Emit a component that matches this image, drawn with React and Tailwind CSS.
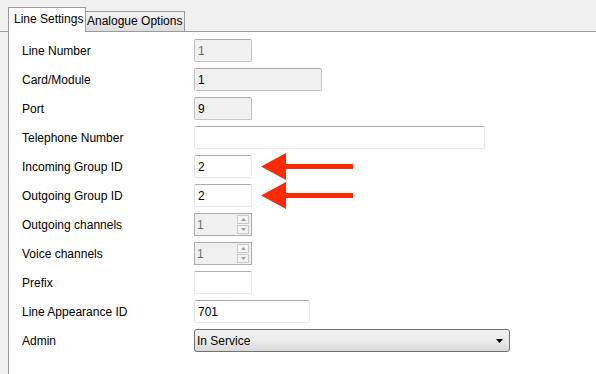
import React from 'react';

const font = { fontFamily: '"Segoe UI", "Liberation Sans", Arial, sans-serif' };

function TextBox({ value = '', width = 'w-[58px]', disabled = false, dim = false }) {
  return (
    <div
      className={`${width} h-[23px] flex items-center px-[3px] text-[12px] border ${
        disabled
          ? 'bg-[#f0f0f0] border-[#c4c4c4] border-t-[#adadad]'
          : 'bg-white border-[#e3e9ef] border-t-[#abadb3] border-l-[#e2e3ea]'
      } ${dim ? 'text-[#6d6d6d] border-[#adadad]' : 'text-black'} rounded-[2px]`}
    >
      {value}
    </div>
  );
}

function Spinner({ value }) {
  return (
    <div className="w-[58px] h-[23px] flex items-stretch border border-[#adadad] bg-[#f0f0f0] text-[12px] text-[#6d6d6d]">
      <div className="flex-1 flex items-center px-[2px]">{value}</div>
      <div className="w-[15px] flex flex-col gap-px p-px pr-[2px]">
        <div className="flex-1 border border-[#c8c8c8] bg-[#f4f4f4] flex items-center justify-center">
          <svg width="5" height="3" viewBox="0 0 5 3"><path d="M2.5 0L5 3H0z" fill="#a0a0a0" /></svg>
        </div>
        <div className="flex-1 border border-[#c8c8c8] bg-[#f4f4f4] flex items-center justify-center">
          <svg width="5" height="3" viewBox="0 0 5 3"><path d="M0 0h5L2.5 3z" fill="#a0a0a0" /></svg>
        </div>
      </div>
    </div>
  );
}

function Select({ value }) {
  return (
    <div className="w-[316px] h-[23px] flex items-center justify-between pl-[2px] pr-[6px] text-[12px] text-black border border-[#707070] rounded-[3px] bg-gradient-to-b from-[#f2f2f2] via-[#ebebeb] to-[#d9d9d9]">
      <span>{value}</span>
      <svg width="7" height="4" viewBox="0 0 7 4"><path d="M0 0h7L3.5 4z" fill="#000" /></svg>
    </div>
  );
}

function Arrow() {
  return (
    <svg width="92" height="28" viewBox="0 0 92 28" className="ml-[9px]">
      <path d="M0 13.5L25 0V11H92V16H25V27z" fill="#ff2a00" />
    </svg>
  );
}

const rows = [
  { label: 'Line Number', field: <TextBox value="1" disabled dim /> },
  { label: 'Card/Module', field: <TextBox value="1" width="w-[128px]" disabled /> },
  { label: 'Port', field: <TextBox value="9" disabled /> },
  { label: 'Telephone Number', field: <TextBox width="w-[291px]" /> },
  { label: 'Incoming Group ID', field: <TextBox value="2" />, arrow: true },
  { label: 'Outgoing Group ID', field: <TextBox value="2" />, arrow: true },
  { label: 'Outgoing channels', field: <Spinner value="1" /> },
  { label: 'Voice channels', field: <Spinner value="1" /> },
  { label: 'Prefix', field: <TextBox /> },
  { label: 'Line Appearance ID', field: <TextBox value="701" width="w-[116px]" /> },
  { label: 'Admin', field: <Select value="In Service" /> },
];

export default function App() {
  return (
    <div className="w-[596px] h-[374px] bg-[#f0f0f0] flex flex-col overflow-hidden text-[12px] text-black" style={font}>
      {/* Tabs */}
      <div className="h-[32px] flex items-end pl-[8px] border-b border-[#999999] flex-shrink-0">
        <div className="relative z-10 -mb-px h-[25px] w-[78px] bg-white border border-b-0 border-[#999999] pl-[5px] pt-[3px] leading-[16px]">
          Line Settings
        </div>
        <div className="h-[20px] w-[99px] border border-l-0 border-b-0 border-[#999999] bg-gradient-to-b from-[#f2f2f2] to-[#dddddd] pl-[1px] pt-[1px] leading-[16px]">
          Analogue Options
        </div>
      </div>

      {/* Panel */}
      <div className="flex-1 ml-[8px] border-l border-[#999999] bg-white pt-[7px] pl-[13px] flex flex-col gap-[6px]">
        {rows.map((r) => (
          <div key={r.label} className="h-[23px] flex items-center">
            <div className="w-[172px]">{r.label}</div>
            {r.field}
            {r.arrow && <Arrow />}
          </div>
        ))}
      </div>
    </div>
  );
}
